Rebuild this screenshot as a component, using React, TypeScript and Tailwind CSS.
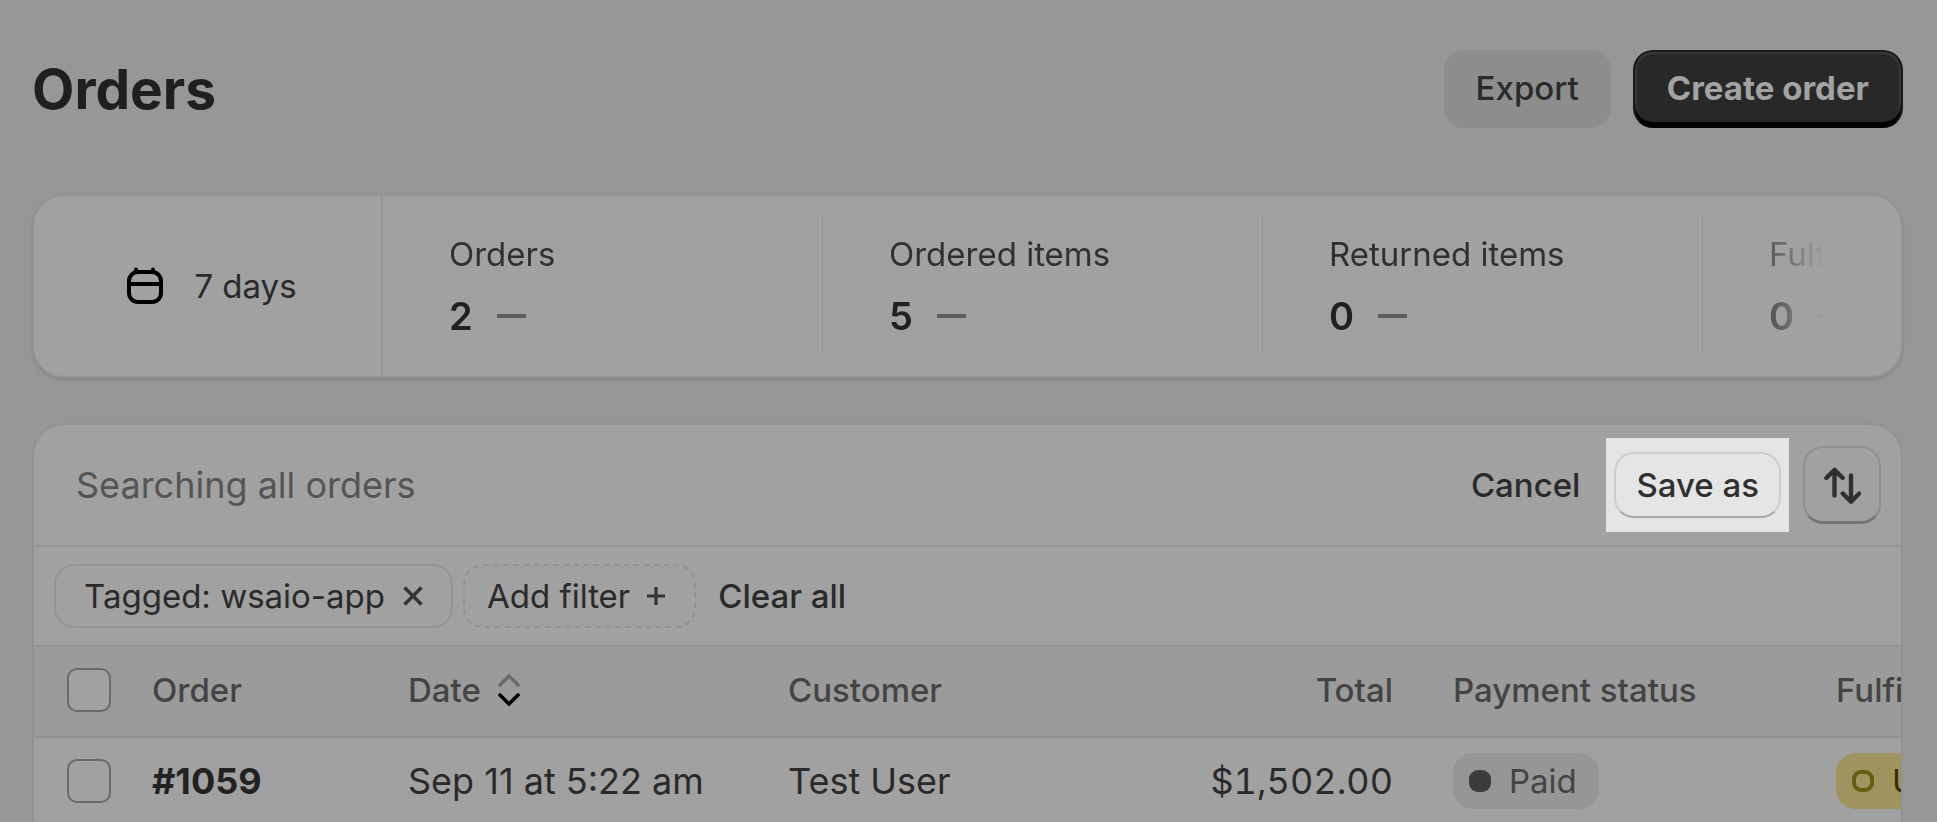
interface Metric {
  label: string;
  value: number;
}

const metrics: Metric[] = [
  { label: "Orders", value: 2 },
  { label: "Ordered items", value: 5 },
  { label: "Returned items", value: 0 },
  { label: "Fulfilled", value: 0 },
];

const orders = [
  {
    id: "#1059",
    date: "Sep 11 at 5:22 am",
    customer: "Test User",
    total: "$1,502.00",
    payment: "Paid",
    fulfillment: "Unfulfilled",
  },
];

function CalendarIcon() {
  return (
    <svg width="38" height="38" viewBox="0 0 38 38" fill="none" stroke="#000" strokeWidth="4" aria-hidden="true">
      <rect x="3" y="5" width="32" height="30" rx="9" />
      <path d="M3 17h32M10 5V2.5M27 5V2.5" strokeLinecap="round" />
    </svg>
  );
}

function SortIcon() {
  return (
    <svg
      width="38"
      height="38"
      viewBox="0 0 38 38"
      fill="none"
      stroke="#303030"
      strokeWidth="4.4"
      strokeLinecap="round"
      strokeLinejoin="round"
      aria-hidden="true"
    >
      <path d="M11.5 29.5V4M3.3 12l8.2-8.2 8.2 8.2" />
      <path d="M28 9.5V35M19.8 27.5l8.2 8.2 8.2-8.2" />
    </svg>
  );
}

function SortArrows() {
  return (
    <svg width="24" height="34" viewBox="0 0 24 34" fill="none" strokeWidth="3.6" strokeLinecap="round" aria-hidden="true">
      <path d="M3 12l9-9 9 9" stroke="#6b6b6b" />
      <path d="M3 22l9 9 9-9" stroke="#000" />
    </svg>
  );
}

function Checkbox({ label }: { label: string }) {
  return (
    <input
      type="checkbox"
      aria-label={label}
      className="block size-11 appearance-none rounded-[10px] border-2 border-[#6a6a6a] bg-[#a1a1a1]"
    />
  );
}

function MetricCard({ label, value }: Metric) {
  return (
    <div className="mt-5 mb-6 h-[136px] w-[440px] shrink-0 border-r border-[#929292] pt-4 pl-[66px]">
      <div className="leading-[44px] whitespace-nowrap text-[#303030]">{label}</div>
      <div className="mt-4 flex items-center gap-6">
        <span className="text-[38px] leading-[48px] font-semibold text-[#212121]">{value}</span>
        <span className="h-1 w-[29px] bg-[#5a5c60]" />
      </div>
    </div>
  );
}

export default function App() {
  return (
    <div className="h-screen overflow-hidden bg-[#979797] pt-[50px] pr-[34px] pl-8 font-[Inter,sans-serif] text-[33px] leading-[44px] text-[#2a2a2a]">
      <header className="flex items-center justify-between">
        <h1 className="text-[55px] leading-[76px] font-bold text-[#1f1f1f]">Orders</h1>
        <div className="flex gap-[22px]">
          <button className="h-[78px] rounded-[20px] bg-[#8d8d8d] px-8 pb-0.5 font-medium">Export</button>
          <button className="h-[78px] rounded-[20px] border-2 border-[#1a1a1a] border-b-black bg-[#282828] px-8 pb-0.5 font-bold text-[#a3a3a3] shadow-[inset_0_-4px_0_#000,inset_0_2px_2px_#3c3c3c,inset_2px_0_2px_#383838,inset_-2px_0_2px_#383838]">
            Create order
          </button>
        </div>
      </header>

      <section className="mt-[66px] flex rounded-[32px] border-2 border-[#939393] bg-[#a1a1a1] shadow-[0_2px_3px_#858585]">
        <button className="flex w-[349px] shrink-0 items-center justify-center gap-[30px] border-r-2 border-[#959595] pl-2">
          <CalendarIcon />
          <span>7 days</span>
        </button>
        <div className="mr-[76px] flex flex-1 overflow-hidden [mask-image:linear-gradient(to_left,transparent,black_90px)]">
          {metrics.map((metric) => (
            <MetricCard key={metric.label} {...metric} />
          ))}
        </div>
      </section>

      <section className="mt-[45px] overflow-hidden rounded-t-[32px] border-2 border-b-0 border-[#929292] bg-[#a1a1a1]">
        <div className="flex h-[122px] items-center border-b-2 border-[#949494] pr-5 pl-[42px]">
          <input
            type="text"
            aria-label="Search orders"
            placeholder="Searching all orders"
            className="min-w-0 flex-1 bg-transparent text-[36px] leading-[48px] outline-none placeholder:text-[#555]"
          />
          <button className="px-[26px] font-medium">Cancel</button>
          <div className="flex h-[94px] items-center bg-[#e5e5e5] px-2">
            <button className="h-[66px] rounded-[20px] border-2 border-[#cdcdcd] border-b-[#a8a8a8] px-5 font-medium text-[#303030]">
              Save as
            </button>
          </div>
          <button
            aria-label="Sort"
            className="ml-[14px] flex size-[78px] items-center justify-center rounded-[20px] border-2 border-b-3 border-[#909090] border-b-[#757575]"
          >
            <SortIcon />
          </button>
        </div>

        <div className="flex h-[100px] items-center gap-[10px] border-b-2 border-[#949494] px-5">
          <button className="flex h-16 items-center gap-[18px] rounded-[20px] border-2 border-[#949494] px-7">
            Tagged: wsaio-app
            <svg width="20" height="20" viewBox="0 0 20 20" stroke="#333" strokeWidth="3.4" aria-hidden="true">
              <path d="M1.5 1.5l17 17M18.5 1.5l-17 17" />
            </svg>
          </button>
          <button className="flex h-16 items-center gap-4 rounded-[20px] border-2 border-dashed border-[#929292] pr-7 pl-[22px]">
            Add filter
            <svg width="20" height="20" viewBox="0 0 20 20" stroke="#333" strokeWidth="3.2" aria-hidden="true">
              <path d="M10 1v18M1 10h18" />
            </svg>
          </button>
          <button className="px-3 font-medium">Clear all</button>
        </div>

        <table className="w-[2200px] table-fixed border-collapse text-left whitespace-nowrap">
          <colgroup>
            <col className="w-[118px]" />
            <col className="w-[256px]" />
            <col className="w-[380px]" />
            <col className="w-[300px]" />
            <col className="w-[305px]" />
            <col className="w-[443px]" />
            <col />
          </colgroup>
          <thead className="text-[#444]">
            <tr className="h-[90px] border-b-2 border-[#909090] bg-[#9b9b9b] *:pb-1 *:font-medium">
              <th className="pl-[33px]">
                <Checkbox label="Select all orders" />
              </th>
              <th>Order</th>
              <th>
                <span className="flex items-center gap-4">
                  Date
                  <SortArrows />
                </span>
              </th>
              <th>Customer</th>
              <th className="text-right">Total</th>
              <th className="pl-[60px]">Payment status</th>
              <th>Fulfillment status</th>
            </tr>
          </thead>
          <tbody className="text-[36px]">
            {orders.map((order) => (
              <tr key={order.id} className="h-[90px] border-b-2 border-[#909090] *:pb-0.5">
                <td className="pl-[33px]">
                  <Checkbox label={`Select order ${order.id}`} />
                </td>
                <td className="font-bold text-[#222]">{order.id}</td>
                <td>{order.date}</td>
                <td>{order.customer}</td>
                <td className="text-right tabular-nums">{order.total}</td>
                <td className="pl-[60px]">
                  <span className="inline-flex h-14 items-center gap-[18px] rounded-[20px] bg-[#969696] pr-[22px] pl-4 align-middle text-[33px] text-[#444]">
                    <span className="size-[22px] rounded-[9px] bg-[#3c3c3c]" />
                    {order.payment}
                  </span>
                </td>
                <td>
                  <span className="inline-flex h-14 items-center gap-[18px] rounded-[20px] bg-[#9e9460] pr-[22px] pl-4 align-middle text-[33px] text-[#332e00]">
                    <span className="size-[22px] rounded-[9px] border-4 border-[#665d10]" />
                    {order.fulfillment}
                  </span>
                </td>
              </tr>
            ))}
          </tbody>
        </table>
      </section>
    </div>
  );
}
